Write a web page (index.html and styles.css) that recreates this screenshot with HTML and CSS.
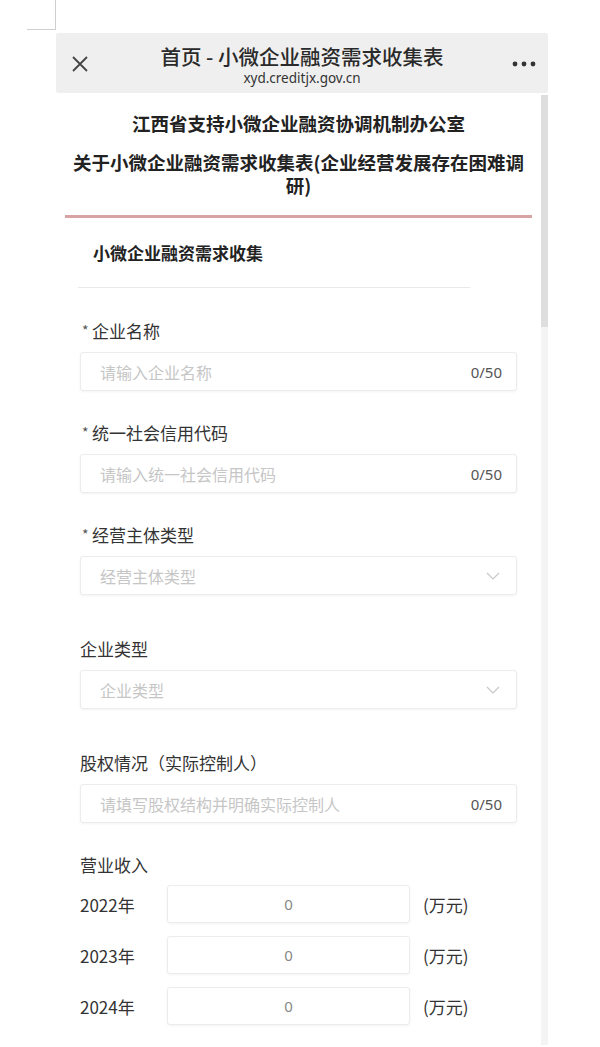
FILE: index.html
```html
<!DOCTYPE html>
<html lang="zh-CN">
<head>
  <meta charset="UTF-8" />
  <title>小微企业融资需求收集表</title>
  <link rel="stylesheet" href="styles.css">
</head>
<body>

  <div class="corner-mark"></div>

  <div class="phone">
    <!-- barra do navegador -->
    <div class="top-bar">
      <span class="close-btn">
        <svg width="18" height="18" viewBox="0 0 18 18"><path d="M2 2 L16 16 M16 2 L2 16" stroke="#444" stroke-width="1.8" fill="none"/></svg>
      </span>
      <div class="top-title">
        <div class="top-name">首页 - 小微企业融资需求收集表</div>
        <div class="top-url">xyd.creditjx.gov.cn</div>
      </div>
      <span class="more-btn">
        <svg width="24" height="6" viewBox="0 0 24 6"><circle cx="3" cy="3" r="2.4" fill="#333"/><circle cx="12" cy="3" r="2.4" fill="#333"/><circle cx="21" cy="3" r="2.4" fill="#333"/></svg>
      </span>
    </div>

    <div class="phone-body">
      <div class="page">
        <h1 class="org-title">江西省支持小微企业融资协调机制办公室</h1>
        <h2 class="form-title">关于小微企业融资需求收集表(企业经营发展存在困难调研)</h2>
        <div class="red-line"></div>

        <div class="section-title">小微企业融资需求收集</div>
        <div class="section-divider"></div>

        <div class="form">
          <div class="field first">
            <div class="label"><span class="req">*</span>企业名称</div>
            <div class="input-box">
              <input type="text" placeholder="请输入企业名称">
              <span class="counter">0/50</span>
            </div>
          </div>

          <div class="field">
            <div class="label"><span class="req">*</span>统一社会信用代码</div>
            <div class="input-box">
              <input type="text" placeholder="请输入统一社会信用代码">
              <span class="counter">0/50</span>
            </div>
          </div>

          <div class="field">
            <div class="label"><span class="req">*</span>经营主体类型</div>
            <div class="input-box select-box">
              <span class="select-text">经营主体类型</span>
              <svg width="14" height="8" viewBox="0 0 14 8"><path d="M1 1 L7 7 L13 1" stroke="#c8c8c8" stroke-width="1.2" fill="none"/></svg>
            </div>
          </div>

          <div class="field wide">
            <div class="label">企业类型</div>
            <div class="input-box select-box">
              <span class="select-text">企业类型</span>
              <svg width="14" height="8" viewBox="0 0 14 8"><path d="M1 1 L7 7 L13 1" stroke="#c8c8c8" stroke-width="1.2" fill="none"/></svg>
            </div>
          </div>

          <div class="field wide">
            <div class="label">股权情况（实际控制人）</div>
            <div class="input-box">
              <input type="text" placeholder="请填写股权结构并明确实际控制人">
              <span class="counter">0/50</span>
            </div>
          </div>

          <div class="field">
            <div class="label">营业收入</div>
            <div class="revenue">
              <div class="revenue-row">
                <span class="year">2022年</span>
                <div class="input-box money-box">0</div>
                <span class="unit">(万元)</span>
              </div>
              <div class="revenue-row">
                <span class="year">2023年</span>
                <div class="input-box money-box">0</div>
                <span class="unit">(万元)</span>
              </div>
              <div class="revenue-row">
                <span class="year">2024年</span>
                <div class="input-box money-box">0</div>
                <span class="unit">(万元)</span>
              </div>
            </div>
          </div>
        </div>
      </div>

      <div class="scrollbar">
        <div class="scroll-thumb"></div>
      </div>
    </div>
  </div>

</body>
</html>
```

FILE: styles.css
```css
body {
  margin: 0;
  background-color: #fff;
  color: #222;
  font-family: "Noto Sans CJK SC", "Noto Sans", sans-serif;
  overflow: hidden;
  height: 1047px;
}

.corner-mark {
  width: 29px;
  height: 30px;
  margin-left: 27px;
  border-right: 1px solid #cfcfcf;
  border-bottom: 1px solid #cfcfcf;
  box-sizing: border-box;
}

.phone {
  width: 492px;
  margin: 3px 0 0 56px;
}

/* barra superior */
.top-bar {
  height: 60px;
  background-color: #efefef;
  border-radius: 2px;
  display: flex;
  align-items: center;
}

.close-btn {
  width: 48px;
  display: flex;
  justify-content: center;
  margin-top: 2px;
}

.top-title {
  flex: 1;
  text-align: center;
  margin-top: 3px;
}

.top-name {
  font-size: 20.5px;
  font-weight: 500;
  color: #2a2a2a;
  line-height: 26px;
}

.top-url {
  font-family: "Noto Sans", sans-serif;
  font-size: 13.5px;
  color: #333;
  line-height: 18px;
}

.more-btn {
  width: 48px;
  display: flex;
  justify-content: center;
  margin-top: 2px;
}

.phone-body {
  display: flex;
}

.page {
  flex: 1;
  padding-top: 18px;
}

.scrollbar {
  width: 7px;
  height: 950px;
  margin-top: 2px;
  background-color: #f4f4f4;
}

.scroll-thumb {
  height: 232px;
  background-color: #dedede;
}

.org-title {
  margin: 0;
  font-size: 18.5px;
  font-weight: bold;
  line-height: 24px;
  text-align: center;
}

.form-title {
  margin: 16px 0 0;
  padding: 0 12px;
  font-size: 18.5px;
  font-weight: bold;
  line-height: 23px;
  text-align: center;
}

.red-line {
  height: 3px;
  margin: 18px 9px 0;
  background-color: #d8a3a3;
}

.section-title {
  margin-top: 23px;
  padding-left: 37px;
  font-size: 17px;
  font-weight: bold;
  line-height: 24px;
}

.section-divider {
  width: 392px;
  height: 1px;
  margin: 22px 0 0 22px;
  background-color: #e8e8e8;
}

/* formulario */
.form {
  padding: 0 24px;
}

.field {
  margin-top: 30px;
}

.field.first {
  margin-top: 31px;
}

.field.wide {
  margin-top: 42px;
}

.label {
  height: 24px;
  font-size: 17px;
  line-height: 24px;
  color: #333;
}

.req {
  display: inline-block;
  width: 10px;
  margin-left: 2px;
  color: #555;
  font-size: 14px;
  line-height: 1;
  position: relative;
  top: -2px;
}

.input-box {
  height: 39px;
  margin-top: 9px;
  box-sizing: border-box;
  border: 1px solid #ececec;
  border-radius: 3px;
  box-shadow: 0 1px 3px rgba(0, 0, 0, 0.05);
  display: flex;
  align-items: center;
  padding: 0 14px 0 19px;
  background: #fff;
}

.input-box input {
  flex: 1;
  border: none;
  outline: none;
  padding: 0;
  font-family: inherit;
  font-size: 16px;
  background: transparent;
}

.input-box input::placeholder {
  color: #c6c6c6;
}

.counter {
  font-family: "Noto Sans", sans-serif;
  font-size: 15px;
  color: #555;
}

.select-box {
  justify-content: space-between;
  padding-right: 16px;
}

.select-box svg {
  margin-top: 1px;
}

.select-text {
  font-size: 16px;
  color: #c6c6c6;
}

.revenue-row {
  display: flex;
  align-items: center;
  margin-top: 13px;
}

.revenue-row:first-child {
  margin-top: 8px;
}

.year {
  width: 87px;
  font-size: 17px;
  color: #333;
}

.money-box {
  width: 243px;
  height: 38px;
  margin-top: 0;
  justify-content: center;
  padding: 0;
  font-family: "Noto Sans", sans-serif;
  font-size: 15px;
  color: #888;
}

.unit {
  margin-left: 13px;
  font-size: 17px;
  color: #333;
}
```
